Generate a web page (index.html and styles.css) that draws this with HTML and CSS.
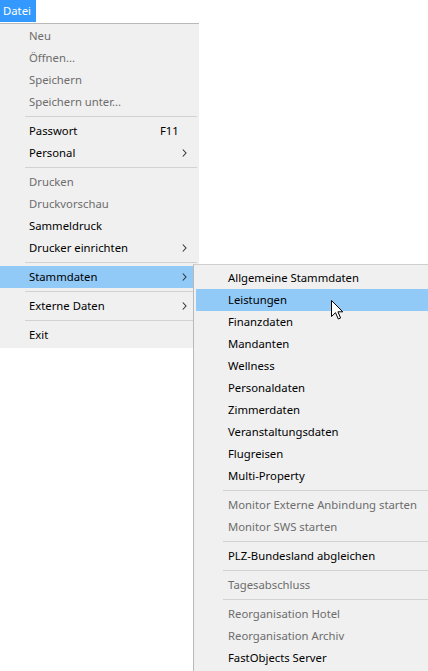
FILE: index.html
```html
<!DOCTYPE html>
<html lang="de">
<head>
<meta charset="utf-8">
<title>Datei</title>
<link rel="stylesheet" href="styles.css">
</head>
<body>
<div class="menubar"><span class="top-item">Datei</span></div>
<div class="stage">
  <div class="menu main">
    <div class="item dis">Neu</div>
    <div class="item dis">Öffnen...</div>
    <div class="item dis">Speichern</div>
    <div class="item dis">Speichern unter...</div>
    <div class="sep"></div>
    <div class="item">Passwort<span class="key">F11</span></div>
    <div class="item">Personal<svg class="arrow" width="5" height="8" viewBox="0 0 5 8"><polyline points="0.8,0.5 4,4 0.8,7.5" fill="none" stroke="#333" stroke-width="1.1"/></svg></div>
    <div class="sep"></div>
    <div class="item dis">Drucken</div>
    <div class="item dis">Druckvorschau</div>
    <div class="item">Sammeldruck</div>
    <div class="item">Drucker einrichten<svg class="arrow" width="5" height="8" viewBox="0 0 5 8"><polyline points="0.8,0.5 4,4 0.8,7.5" fill="none" stroke="#333" stroke-width="1.1"/></svg></div>
    <div class="sep"></div>
    <div class="item hl">Stammdaten<svg class="arrow" width="5" height="8" viewBox="0 0 5 8"><polyline points="0.8,0.5 4,4 0.8,7.5" fill="none" stroke="#333" stroke-width="1.1"/></svg></div>
    <div class="sep"></div>
    <div class="item">Externe Daten<svg class="arrow" width="5" height="8" viewBox="0 0 5 8"><polyline points="0.8,0.5 4,4 0.8,7.5" fill="none" stroke="#333" stroke-width="1.1"/></svg></div>
    <div class="sep"></div>
    <div class="item">Exit</div>
  </div>
  <div class="menu sub">
    <div class="item">Allgemeine Stammdaten</div>
    <div class="item hl">Leistungen</div>
    <div class="item">Finanzdaten</div>
    <div class="item">Mandanten</div>
    <div class="item">Wellness</div>
    <div class="item">Personaldaten</div>
    <div class="item">Zimmerdaten</div>
    <div class="item">Veranstaltungsdaten</div>
    <div class="item">Flugreisen</div>
    <div class="item">Multi-Property</div>
    <div class="sep"></div>
    <div class="item dis">Monitor Externe Anbindung starten</div>
    <div class="item dis">Monitor SWS starten</div>
    <div class="sep"></div>
    <div class="item">PLZ-Bundesland abgleichen</div>
    <div class="sep"></div>
    <div class="item dis">Tagesabschluss</div>
    <div class="sep"></div>
    <div class="item dis">Reorganisation Hotel</div>
    <div class="item dis">Reorganisation Archiv</div>
    <div class="item">FastObjects Server</div>
  </div>
  <svg class="cursor" width="13" height="20" viewBox="0 0 13 20"><path d="M0.5,0.5 L0.5,16.5 L4.5,12.7 L7.3,19 L9.6,18 L6.9,11.8 L11.8,11.8 Z" fill="#fff" stroke="#000" stroke-width="1" stroke-linejoin="miter"/></svg>
</div>
</body>
</html>
```
FILE: styles.css
```css
html, body {
  margin: 0;
  padding: 0;
  background: #ffffff;
}
body {
  font-family: "Noto Sans", "Open Sans", sans-serif;
  font-size: 11.3px;
  color: #000;
  width: 428px;
  height: 671px;
  overflow: hidden;
}
.menubar {
  height: 23px;
  display: flex;
}
.top-item {
  background: #3399ff;
  color: #fff;
  width: 36px;
  height: 22px;
  line-height: 21px;
  padding-left: 3px;
  box-sizing: border-box;
}
.stage {
  position: relative;
}
.menu {
  background: #f0f0f0;
  box-sizing: border-box;
}
.main {
  width: 199px;
  border-top: 1px solid #b9b9b9;
  padding: 1px 0 2px 0;
}
.sub {
  position: absolute;
  left: 193px;
  top: 241px;
  width: 240px;
  border-top: 1px solid #cfcfcf;
  border-left: 1px solid #b9b9b9;
  padding: 2px 0 2px 2px;
}
.item {
  height: 22px;
  box-sizing: border-box;
  padding-bottom: 1px;
  display: flex;
  align-items: center;
  white-space: nowrap;
  position: relative;
}
.main .item {
  padding-left: 29px;
}
.sub .item {
  padding-left: 32px;
}
.item.dis {
  color: #6d6d6d;
}
.item.hl {
  background: #91c9f7;
}
.key {
  position: absolute;
  left: 160px;
}
.arrow {
  position: absolute;
  left: 182px;
  top: 7px;
}
.sep {
  height: 7px;
  display: flex;
  align-items: center;
}
.sep::before {
  content: "";
  flex: 1;
  height: 1px;
  background: #d2d2d2;
}
.main .sep {
  margin: 0 2px 0 25px;
}
.sub .sep {
  margin: 0 0 0 27px;
}
.cursor {
  position: absolute;
  left: 331px;
  top: 277px;
}
```
